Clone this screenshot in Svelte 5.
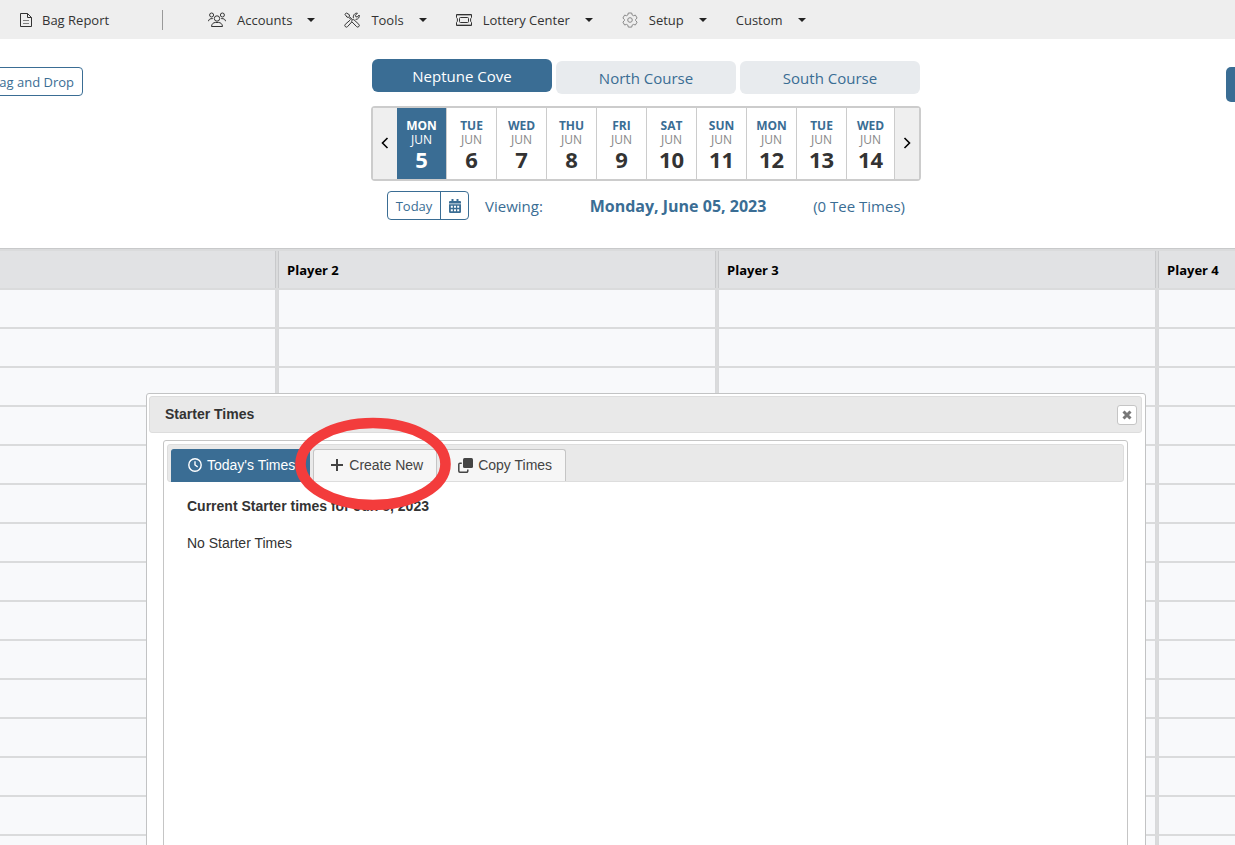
<script>
    const menus = [
        { label: 'Accounts', icon: 'people' },
        { label: 'Tools', icon: 'tools' },
        { label: 'Lottery Center', icon: 'ticket' },
        { label: 'Setup', icon: 'gear' },
        { label: 'Custom', icon: null },
    ];

    const courses = ['Neptune Cove', 'North Course', 'South Course'];
    const weekdays = ['MON', 'TUE', 'WED', 'THU', 'FRI', 'SAT', 'SUN', 'MON', 'TUE', 'WED'];
    const days = weekdays.map((weekday, i) => ({ weekday, month: 'JUN', date: i + 5 }));
    const tabs = [
        { label: "Today's Times", icon: 'clock' },
        { label: 'Create New', icon: 'plus' },
        { label: 'Copy Times', icon: 'copy' },
    ];
    const players = ['', 'Player 2', 'Player 3', 'Player 4'];
    const rows = Array.from({ length: 16 }, (_, i) => i);

    let course = $state('Neptune Cove');
    let selectedDate = $state(5);
    let activeTab = $state("Today's Times");
    let dialogOpen = $state(true);
</script>

{#snippet icon(name)}
    {#if name === 'page'}
        <svg class="icon" width="12" height="16" viewBox="0 0 12 16" aria-hidden="true">
            <path d="M.5 1.500h7l4 4v9H.5zM7.500 1.500v4h4" />
            <path d="M3 8.500h6M3 11.500h6" opacity=".6" />
        </svg>
    {:else if name === 'people'}
        <svg class="icon" width="18" height="16" viewBox="0 0 18 16" aria-hidden="true">
            <circle cx="3.600" cy="3" r="2" />
            <circle cx="14.400" cy="3" r="2" />
            <circle cx="9" cy="6.500" r="2.700" />
            <path d="M.5 9.200C.7 7.300 2 6.500 4.800 6.600M17.500 9.200c-.2-1.900-1.500-2.700-4.300-2.600M3.500 14.500c.2-2.600 1.800-4 4-4h3c2.200 0 3.800 1.400 4 4z" />
        </svg>
    {:else if name === 'tools'}
        <svg class="icon" width="16" height="16" viewBox="0 0 16 16" aria-hidden="true">
            <path d="M1 2.300 2.400.9l3 1.900v1.800l3.300 3.300 1.100-.3 5 4.700a1.500 1.500 0 0 1-2.200 2.300l-4.900-5 .2-1.100-3.300-3.300H3z" />
            <path d="m6 8.200-4.700 4.100a1.600 1.600 0 0 0 2.300 2.300L7.700 10M9.400 6.200c-.6-2.900 1.300-5.400 4-5l-2 2.100.4 1.400 1.500.3 1.900-2c.6 2.200-1 4.500-3.600 4.400" />
        </svg>
    {:else if name === 'ticket'}
        <svg class="icon" width="16" height="14" viewBox="0 0 16 14" aria-hidden="true">
            <path d="M1 2h14M1 12h14" stroke-width="2" opacity=".35" />
            <path d="M.5 4.500V1.500h15v3c-1.300.4-1.300 4.600 0 5v3H.5v-3c1.300-.4 1.300-4.600 0-5z" />
            <rect x="3.500" y="4.500" width="9" height="5" rx="1" />
        </svg>
    {:else if name === 'gear'}
        <svg class="icon light" width="16" height="16" viewBox="0 0 16 16" aria-hidden="true">
            <path d="M6.300 1h3.400l.5 2 1.200.7 2-.6 1.700 2.900-1.500 1.500v1.100l1.500 1.500-1.700 2.900-2-.6-1.200.7-.5 2H6.300l-.5-2-1.200-.7-2 .6L.9 10.100l1.500-1.500V7.500L.9 6l1.700-2.900 2 .6L5.800 3z" />
            <circle cx="8" cy="8" r="2.300" />
        </svg>
    {:else if name === 'calendar'}
        <svg width="12" height="14" viewBox="0 0 12 14" fill="currentColor" aria-hidden="true">
            <path fill-rule="evenodd" d="M2.500 0h2v2h3V0h2v2H11a1 1 0 0 1 1 1v1.500H0V3a1 1 0 0 1 1-1h1.500zM0 5.300h12v7.500a1.200 1.200 0 0 1-1.200 1.200H1.200A1.200 1.200 0 0 1 0 12.800zm1.800 1.500v2h2v-2zm3.200 0v2h2v-2zm3.200 0v2h2v-2zm-6.400 3.400v2h2v-2zm3.200 0v2h2v-2zm3.200 0v2h2v-2z" />
        </svg>
    {:else if name === 'clock'}
        <svg class="icon bold" width="14" height="14" viewBox="0 0 14 14" aria-hidden="true">
            <circle cx="7" cy="7" r="6.200" />
            <path d="M7 3.200V7l2.700 1.800" />
        </svg>
    {:else if name === 'plus'}
        <svg class="icon thick" width="13" height="12" viewBox="0 0 13 12" aria-hidden="true">
            <path d="M6 0v12M0 6h12" />
        </svg>
    {:else if name === 'copy'}
        <svg class="icon" width="15" height="15" viewBox="0 0 15 15" aria-hidden="true">
            <rect x="5" y="0" width="10" height="10" rx="1.500" fill="#444" stroke="none" />
            <path d="M3.800 5.200H2A1.200 1.200 0 0 0 .8 6.400V13A1.200 1.200 0 0 0 2 14.200h6.600A1.200 1.200 0 0 0 9.800 13v-1.500" stroke-width="1.500" />
        </svg>
    {/if}
{/snippet}

<div class="page">
    <nav class="menu-bar">
        <a class="menu-link" href="#bag-report">{@render icon('page')}Bag Report</a>
        <span class="divider"></span>
        {#each menus as menu (menu.label)}
            <button class="menu-btn">
                {#if menu.icon}{@render icon(menu.icon)}{/if}
                <span>{menu.label}</span>
                <span class="caret"></span>
            </button>
        {/each}
    </nav>

    <header class="toolbar">
        <div class="side left">
            <button class="outline-btn">Drag and Drop</button>
        </div>

        <div class="schedule">
            <div class="courses">
                {#each courses as name (name)}
                    <button class="course" class:active={course === name} onclick={() => course = name}>{name}</button>
                {/each}
            </div>

            <div class="date-strip">
                <button class="step" aria-label="Previous days">
                    <svg width="8" height="12" viewBox="0 0 8 12"><path d="M6.500 1 1.500 6l5 5" /></svg>
                </button>
                {#each days as day (day.date)}
                    <button class="day" class:selected={selectedDate === day.date} onclick={() => selectedDate = day.date}>
                        <span class="weekday">{day.weekday}</span>
                        <span class="month">{day.month}</span>
                        <span class="date">{day.date}</span>
                    </button>
                {/each}
                <button class="step" aria-label="Next days">
                    <svg width="8" height="12" viewBox="0 0 8 12"><path d="m1.500 1 5 5-5 5" /></svg>
                </button>
            </div>

            <div class="viewing">
                <div class="btn-group">
                    <button class="today-btn">Today</button>
                    <button class="calendar-btn" aria-label="Pick a date">{@render icon('calendar')}</button>
                </div>
                <span class="viewing-label">Viewing:</span>
                <strong>Monday, June 05, 2023</strong>
                <span class="tee-count">(0 Tee Times)</span>
            </div>
        </div>

        <div class="side right">
            <button class="solid-btn" aria-label="More"></button>
        </div>
    </header>

    <table class="tee-sheet">
        <colgroup>
            <col class="col-first" />
            <col class="col-player" />
            <col class="col-player" />
            <col />
        </colgroup>
        <thead>
            <tr>
                {#each players as player}
                    <th>{player}</th>
                {/each}
            </tr>
        </thead>
        <tbody>
            {#each rows as row (row)}
                <tr>
                    {#each players as _}
                        <td></td>
                    {/each}
                </tr>
            {/each}
        </tbody>
    </table>

    {#if dialogOpen}
        <div class="dialog" role="dialog" aria-labelledby="dialog-title">
            <div class="title-bar">
                <span id="dialog-title">Starter Times</span>
                <button class="close-btn" aria-label="Close" onclick={() => dialogOpen = false}>
                    <svg width="10" height="10" viewBox="0 0 10 10"><path d="m1.500 1.500 7 7m0-7-7 7" /></svg>
                </button>
            </div>
            <div class="tabs">
                <div class="tab-list" role="tablist">
                    {#each tabs as tab (tab.label)}
                        <button
                            class="tab"
                            class:active={activeTab === tab.label}
                            role="tab"
                            aria-selected={activeTab === tab.label}
                            onclick={() => activeTab = tab.label}
                        >
                            {@render icon(tab.icon)}{tab.label}
                        </button>
                    {/each}
                </div>
                <div class="tab-panel" role="tabpanel">
                    <h2>Current Starter times for Jun 5, 2023</h2>
                    <p>No Starter Times</p>
                </div>
            </div>
            <svg class="highlight" width="158" height="94" viewBox="0 0 158 94" aria-hidden="true">
                <ellipse cx="79" cy="47" rx="72.500" ry="41" />
            </svg>
        </div>
    {/if}
</div>

<style>
    :global(body) {
        background: #fff;
    }

    .page {
        --blue: #3a6d94;
        --line: #ccc;
        position: relative;
        height: 100vh;
        overflow: hidden;
        font-family: "Segoe UI", "Open Sans", sans-serif;
        font-size: 13px;
        color: #333;
    }

    button {
        font: inherit;
        color: inherit;
        margin: 0;
        padding: 0;
        border: none;
        background: none;
        cursor: pointer;
        white-space: nowrap;
    }

    .icon {
        flex-shrink: 0;
        fill: none;
        stroke: currentColor;
        stroke-width: 1;
    }

    .icon.light {
        stroke: #888;
    }

    .icon.bold {
        stroke-width: 1.4;
    }

    .icon.thick {
        stroke-width: 2;
    }

    .menu-bar {
        display: flex;
        align-items: center;
        height: 39px;
        padding-left: 20px;
        background: #eee;
    }

    .menu-link,
    .menu-btn {
        display: flex;
        align-items: center;
        gap: 11px;
        color: #333;
        text-decoration: none;
        white-space: nowrap;
    }

    .menu-link {
        gap: 10px;
    }

    .menu-btn {
        margin-right: 29px;
    }

    .divider {
        width: 1px;
        height: 20px;
        margin: 0 45px 0 53px;
        background: #999;
    }

    .caret {
        margin-left: 4px;
        border: 4px solid transparent;
        border-top-color: #222;
        border-bottom: none;
    }

    .toolbar {
        display: grid;
        grid-template-columns: 83px 288fr 550px 305fr 9px;
        height: 209px;
    }

    .side {
        display: flex;
        padding-top: 28px;
        overflow: hidden;
    }

    .side.left {
        grid-column: 1;
        justify-content: flex-end;
    }

    .side.right {
        grid-column: 5;
    }

    .outline-btn {
        height: 29px;
        padding: 0 8px;
        border: 1px solid var(--blue);
        border-radius: 4px;
        color: var(--blue);
    }

    .solid-btn {
        flex-shrink: 0;
        width: 90px;
        height: 35px;
        border-radius: 5px;
        background: var(--blue);
    }

    .schedule {
        grid-column: 3;
        padding-top: 20px;
        color: var(--blue);
    }

    .courses {
        display: flex;
        gap: 4px;
        height: 47px;
        padding: 0 1px;
    }

    .course {
        flex: 1;
        height: 33px;
        margin-top: 2px;
        border-radius: 6px;
        background: #e8ebee;
        color: var(--blue);
        font-size: 15px;
    }

    .course.active {
        margin-top: 0;
        background: var(--blue);
        color: #fff;
    }

    .date-strip {
        display: flex;
        height: 71px;
        border: 2px solid var(--line);
        border-radius: 4px;
    }

    .step {
        width: 24px;
        background: #efefef;
    }

    .step path {
        fill: none;
        stroke: #000;
        stroke-width: 1.6;
    }

    .day {
        box-sizing: border-box;
        display: flex;
        flex: 0 0 50px;
        flex-direction: column;
        align-items: center;
        padding-top: 11px;
        border-right: 1px solid var(--line);
        font-size: 12px;
        line-height: 14px;
        background: #fff;
    }

    .day:nth-last-child(2) {
        flex: 1;
    }

    .weekday {
        color: var(--blue);
        font-weight: bold;
    }

    .month {
        color: #888;
    }

    .date {
        color: #333;
        font-size: 22px;
        font-weight: bold;
        line-height: 25px;
    }

    .day.selected {
        background: var(--blue);
    }

    .day.selected span {
        color: #fff;
    }

    .viewing {
        display: flex;
        align-items: center;
        height: 29px;
        padding: 10px 16px 0;
        font-size: 15px;
    }

    .btn-group {
        display: flex;
        height: 27px;
        border: 1px solid var(--blue);
        border-radius: 4px;
        font-size: 13px;
    }

    .today-btn {
        width: 52px;
    }

    .calendar-btn {
        display: flex;
        align-items: center;
        justify-content: center;
        width: 28px;
        border-left: 1px solid var(--blue);
    }

    .viewing-label {
        margin: 0 auto 0 16px;
    }

    .viewing strong {
        font-size: 16px;
    }

    .tee-count {
        margin-left: auto;
    }

    .tee-sheet {
        width: calc(100% + 8px);
        margin-left: -4px;
        table-layout: fixed;
        border-collapse: separate;
        border-spacing: 2px;
        border-top: 1px solid #c8c9ca;
        background: #dadbdc;
    }

    .col-first {
        width: 278px;
    }

    .col-player {
        width: 438px;
    }

    th,
    td {
        box-sizing: border-box;
        height: 37px;
        padding: 0 8px;
        border: solid #d8d9db;
        border-width: 0 1px;
        background: #f8f9fb;
        text-align: left;
    }

    th {
        border-color: #c8c9cb;
        background: #e1e2e4;
        color: #000;
    }

    .dialog {
        position: absolute;
        top: 393px;
        right: 89px;
        left: 146px;
        height: 560px;
        padding: 2px 3px 2px 2px;
        box-sizing: border-box;
        border: 1px solid #c2c3c4;
        border-radius: 3px;
        background: #fff;
        font-family: Arial, "Liberation Sans", sans-serif;
        font-size: 14px;
    }

    .title-bar {
        display: flex;
        align-items: center;
        justify-content: space-between;
        height: 35px;
        padding: 0 4px 0 15px;
        border: 1px solid #ddd;
        border-radius: 3px;
        background: #e9e9e9;
        font-weight: bold;
    }

    #dialog-title {
        padding-bottom: 2px;
    }

    .close-btn {
        display: flex;
        align-items: center;
        justify-content: center;
        box-sizing: border-box;
        width: 20px;
        height: 20px;
        border: 1px solid #c5c5c5;
        border-radius: 3px;
        background: #fff;
    }

    .close-btn path {
        stroke: #777;
        stroke-width: 3;
    }

    .tabs {
        height: 480px;
        margin: 7px 14px 0;
        padding: 3px;
        border: 1px solid #c5c5c5;
        border-radius: 3px;
    }

    .tab-list {
        display: flex;
        gap: 3px;
        height: 32px;
        padding: 4px 3px 0;
        border: 1px solid #ddd;
        border-radius: 3px;
        background: #e9e9e9;
    }

    .tab {
        display: flex;
        align-items: center;
        gap: 5px;
        padding: 0 13px 1px 17px;
        border: 1px solid #c5c5c5;
        border-bottom: none;
        border-radius: 3px 3px 0 0;
        background: #f6f6f6;
        color: #444;
    }

    .tab.active {
        margin-bottom: -1px;
        border-color: var(--blue);
        padding: 0 14px 2px 16px;
        background: var(--blue);
        color: #fff;
    }

    .tab-panel {
        padding: 16px 20px;
        line-height: 17px;
    }

    h2 {
        margin: 0 0 20px;
        font-size: 14px;
    }

    p {
        margin: 0;
    }

    .highlight {
        position: absolute;
        top: 23px;
        left: 147px;
        pointer-events: none;
    }

    .highlight ellipse {
        fill: none;
        stroke: #f33c3c;
        stroke-width: 10.6;
    }
</style>
